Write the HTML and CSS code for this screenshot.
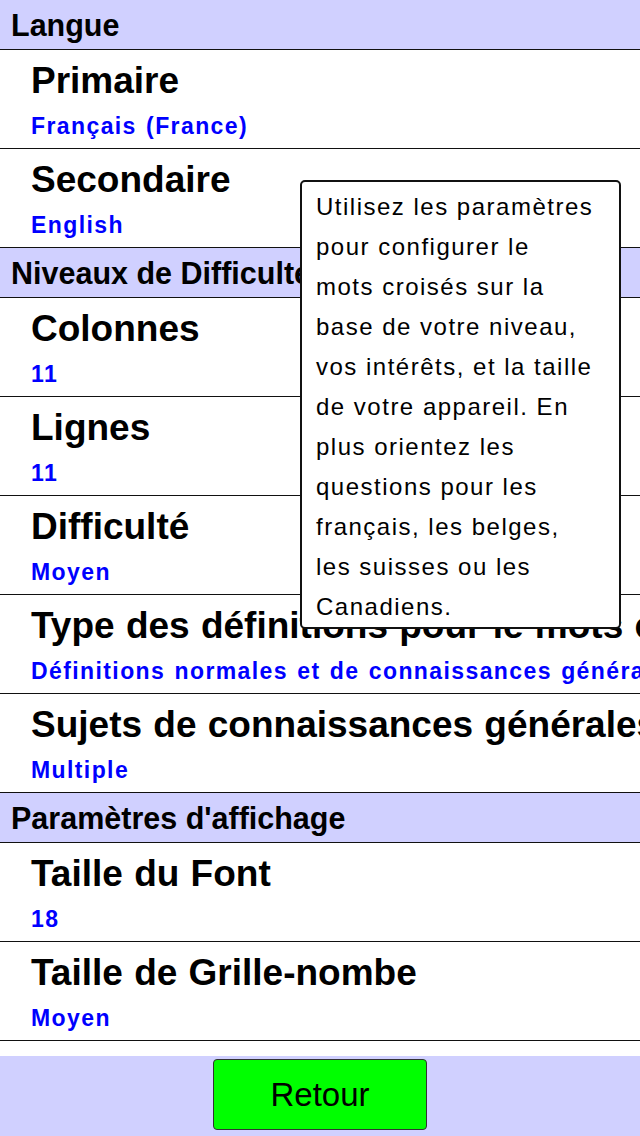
FILE: index.html
```html
<!DOCTYPE html>
<html lang="fr">
<head>
  <meta charset="UTF-8">
  <meta name="viewport" content="width=device-width, initial-scale=1.0">
  <title>Paramètres</title>
  <link rel="stylesheet" href="styles.css">
</head>
<body>
  <div class="screen">
    <!-- Settings list -->
    <div class="settings">
      <div class="group-title">Langue</div>
      <div class="setting">
        <div class="label">Primaire</div>
        <div class="value">Français (France)</div>
      </div>
      <div class="setting">
        <div class="label">Secondaire</div>
        <div class="value">English</div>
      </div>

      <div class="group-title">Niveaux de Difficulté</div>
      <div class="setting">
        <div class="label">Colonnes</div>
        <div class="value">11</div>
      </div>
      <div class="setting">
        <div class="label">Lignes</div>
        <div class="value">11</div>
      </div>
      <div class="setting">
        <div class="label">Difficulté</div>
        <div class="value">Moyen</div>
      </div>
      <div class="setting">
        <div class="label">Type des définitions pour le mots croisés</div>
        <div class="value">Définitions normales et de connaissances générales</div>
      </div>
      <div class="setting">
        <div class="label">Sujets de connaissances générales</div>
        <div class="value">Multiple</div>
      </div>

      <div class="group-title">Paramètres d'affichage</div>
      <div class="setting">
        <div class="label">Taille du Font</div>
        <div class="value">18</div>
      </div>
      <div class="setting">
        <div class="label">Taille de Grille-nombe</div>
        <div class="value">Moyen</div>
      </div>
    </div>

    <!-- Help popup -->
    <div class="help-popup">
      Utilisez les paramètres pour configurer le mots croisés sur la base de votre niveau, vos intérêts, et la taille de votre appareil. En plus orientez les questions pour les français, les belges, les suisses ou les Canadiens.
    </div>

    <!-- Bottom bar -->
    <div class="bottom-bar">
      <button class="back-button">Retour</button>
    </div>
  </div>
</body>
</html>
```

FILE: styles.css
```css
body {
  margin: 0;
  padding: 0;
  background-color: #fff;
  color: #000;
  font-family: "Liberation Sans", Arial, sans-serif;
}

.screen {
  position: relative;
  width: 640px;
  height: 1136px;
  display: flex;
  flex-direction: column;
  overflow: hidden;
}

/* Settings list */
.settings {
  flex: 1;
  overflow: hidden;
}

.group-title {
  height: 48px;
  padding: 1px 0 0 11px;
  line-height: 48px;
  font-size: 30.5px;
  font-weight: bold;
  background-color: #d0d0ff;
  border-bottom: 1px solid #111;
  white-space: nowrap;
}

.setting {
  height: 88px;
  padding: 6px 0 4px 31px;
  border-bottom: 1px solid #111;
  white-space: nowrap;
}

.label {
  font-size: 37px;
  font-weight: bold;
  word-spacing: 1px;
  line-height: 50px;
}

.value {
  margin-top: 2px;
  font-size: 23px;
  font-weight: bold;
  letter-spacing: 1.4px;
  word-spacing: 1.5px;
  line-height: 36px;
  color: #0000ff;
}

/* Help popup */
.help-popup {
  position: absolute;
  left: 300px;
  top: 180px;
  width: 278px;
  padding: 5px 25px 0 14px;
  background-color: #fff;
  border: 2px solid #111;
  border-radius: 5px;
  font-size: 24px;
  letter-spacing: 1.5px;
  line-height: 40px;
}

/* Bottom bar */
.bottom-bar {
  height: 80px;
  background-color: #d0d0ff;
  display: flex;
  justify-content: center;
  padding-top: 3px;
  box-sizing: border-box;
}

.back-button {
  width: 214px;
  height: 71px;
  padding: 0;
  background-color: #00ff00;
  border: 1px solid #333;
  border-radius: 4px;
  font-family: "Liberation Sans", Arial, sans-serif;
  font-size: 33px;
  color: #000;
}
```
